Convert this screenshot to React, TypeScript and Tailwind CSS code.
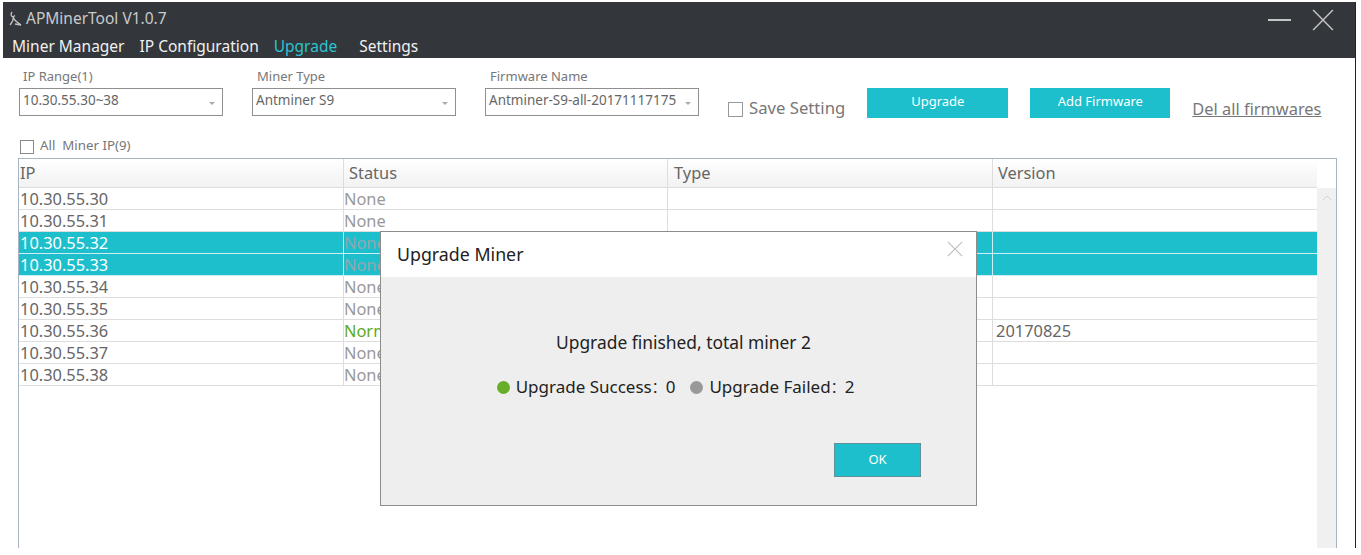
const rows = [
  { ip: "10.30.55.30", status: "None" },
  { ip: "10.30.55.31", status: "None" },
  { ip: "10.30.55.32", status: "None", selected: true },
  { ip: "10.30.55.33", status: "None", selected: true },
  { ip: "10.30.55.34", status: "None" },
  { ip: "10.30.55.35", status: "None" },
  { ip: "10.30.55.36", status: "Normal", version: "20170825" },
  { ip: "10.30.55.37", status: "None" },
  { ip: "10.30.55.38", status: "None" },
];

function Field({ label, value, width, labelPad }: { label: string; value: string; width: string; labelPad: string }) {
  return (
    <div className={width}>
      <div className={`h-[22px] text-[13px] leading-[21px] text-[#777] ${labelPad}`}>{label}</div>
      <div className="flex h-[28px] items-center justify-between border border-[#8f8f8f] pl-[3px] pr-[7px] text-[13.5px] text-[#666]">
        <span className="-mt-[3px] whitespace-nowrap">{value}</span>
        <span className="mt-[2px] h-0 w-0 border-x-[3px] border-t-[3px] border-x-transparent border-t-[#aaa]" />
      </div>
    </div>
  );
}

function Logo() {
  return (
    <svg width="13" height="15" viewBox="0 0 13 15" fill="none" stroke="#c4c4c4" strokeWidth="1.3">
      <path d="M3 1 C1.5 3 2 5.5 4 6 L6 4.5" />
      <path d="M4.5 6 C4.5 9 3.5 11 1 14" />
      <path d="M4.5 7 C6 10 9 12 12 14 L6 13" />
    </svg>
  );
}

function Cross({ size, stroke, width }: { size: number; stroke: string; width: number }) {
  return (
    <svg width={size} height={size} viewBox="0 0 20 20" fill="none" stroke={stroke} strokeWidth={width}>
      <path d="M1 1 L19 19 M19 1 L1 19" />
    </svg>
  );
}

export default function App() {
  return (
    <div className="relative h-[555px] w-[1361px] overflow-hidden bg-white pl-[3px] pr-[5px] pt-[2px] font-['Noto_Sans','Noto_Sans_CJK_SC',sans-serif]">
      <div className="h-[546px] border-r border-[#222]">
        <header className="h-[56px] bg-[#33363b] pl-[9px] pr-[21px] text-white">
          <div className="flex h-[33px] items-center justify-between">
            <div className="flex items-center gap-[4px] text-[15.5px] text-[#c9cacb]">
              <span className="-ml-[3px]"><Logo /></span>
              <span>APMinerTool V1.0.7</span>
            </div>
            <div className="flex items-center gap-[21px] pt-[3px] text-[#c4c5c6]">
              <div className="h-[1.5px] w-[23px] bg-[#c4c5c6]" />
              <Cross size={22} stroke="#c4c5c6" width={1.3} />
            </div>
          </div>
          <nav className="flex gap-[15px] text-[15.5px] leading-[22px] text-[#f0f0f0]">
            <span>Miner Manager</span>
            <span>IP Configuration</span>
            <span className="text-[#2bc4cf]">Upgrade</span>
            <span className="ml-[7px]">Settings</span>
          </nav>
        </header>

        <div className="flex h-[100px] pl-[16px] pt-[8px]">
          <div className="mr-[29px]">
            <Field label="IP Range(1)" value="10.30.55.30~38" width="w-[204px]" labelPad="pl-[4px]" />
          </div>
          <div className="mr-[29px]">
            <Field label="Miner Type" value="Antminer S9" width="w-[204px]" labelPad="pl-[5px]" />
          </div>
          <Field label="Firmware Name" value="Antminer-S9-all-20171117175" width="w-[214px]" labelPad="pl-[5px]" />
          <label className="ml-[29px] mt-[27px] flex h-[30px] items-center text-[16.7px] text-[#777]">
            <span className="mr-[6px] mt-[3px] h-[15px] w-[15px] border border-[#999]" />
            Save Setting
          </label>
          <button className="ml-[22px] mt-[22px] h-[30px] w-[141px] bg-[#1dbfcc] pb-[2px] text-[13px] text-white">Upgrade</button>
          <button className="ml-[22px] mt-[22px] h-[30px] w-[140px] bg-[#1dbfcc] pb-[2px] text-[13px] text-white">Add Firmware</button>
          <a className="ml-[22px] mt-[28px] h-[30px] whitespace-nowrap text-[16.4px] leading-[30px] text-[#777] underline">Del all firmwares</a>
        </div>

        <div className="ml-[15px] mr-[18px] -mt-[21px]">
          <label className="mb-[2px] flex h-[19px] items-center pl-[2px] text-[13.3px] text-[#777]">
            <span className="mr-[6px] h-[14px] w-[14px] border border-[#888]" />
            <span className="-mt-[2px]">All&nbsp; Miner IP(9)</span>
          </label>
          <div className="flex h-[390px] border-l border-t border-r border-[#a9b4c2]">
            <div className="w-[1298px]">
              <div className="flex h-[29px] border-b border-[#ddd] bg-[#f5f5f5] bg-gradient-to-b from-white to-[#f2f2f2] text-[16.4px] leading-[28px] text-[#666]">
                <div className="w-[324px] pl-[1px]">IP</div>
                <div className="w-[324px] border-l border-[#ddd] pl-[5px]">Status</div>
                <div className="w-[325px] border-l border-[#ddd] pl-[6px]">Type</div>
                <div className="flex-1 border-l border-[#ddd] pl-[5px]">Version</div>
              </div>
              {rows.map((r) => (
                <div
                  key={r.ip}
                  className={`flex h-[22px] border-b text-[16.4px] leading-[21px] ${
                    r.selected ? "border-[#cfeef1] bg-[#1dbfcc] text-white" : "border-[#ddd] text-[#666]"
                  }`}
                >
                  <div className="w-[324px] pl-[1px]">{r.ip}</div>
                  <div
                    className={`w-[324px] border-l ${r.selected ? "border-[#cfeef1] text-[#8fa9ad]" : "border-[#ddd]"} ${
                      r.selected ? "" : r.status === "Normal" ? "text-[#5eaa22]" : "text-[#999]"
                    }`}
                  >
                    {r.status}
                  </div>
                  <div className={`w-[325px] border-l ${r.selected ? "border-[#cfeef1]" : "border-[#ddd]"}`} />
                  <div className={`flex-1 border-l pl-[3px] ${r.selected ? "border-[#cfeef1]" : "border-[#ddd]"}`}>{r.version}</div>
                </div>
              ))}
            </div>
            <div className="mt-[29px] flex w-[19px] justify-center bg-[#f0f0f0] pt-[7px]">
              <svg width="10" height="6" viewBox="0 0 10 6" fill="none" stroke="#d2d2d2" strokeWidth="1">
                <path d="M1 5 L5 1 L9 5" />
              </svg>
            </div>
          </div>
        </div>
      </div>

      <div className="absolute left-[380px] top-[231px] h-[275px] w-[597px] border border-[#8c8c8c] bg-[#eeeeee]">
        <div className="flex h-[45px] items-center justify-between bg-white pl-[16px] pr-[13px] text-[17.8px] text-[#222]">
          <span>Upgrade Miner</span>
          <span className="-mt-[12px]">
            <Cross size={16} stroke="#bbb" width={1.3} />
          </span>
        </div>
        <div className="flex flex-col items-center pt-[53px] leading-[24px] text-[#222]">
          <div className="ml-[10px] text-[17.4px]">Upgrade finished, total miner 2</div>
          <div className="mr-[6px] mt-[21px] flex items-center text-[17px]">
            <span className="mr-[6px] h-[13px] w-[13px] rounded-full bg-[#69ae28]" />
            <span>Upgrade Success</span>
            <span className="text-[14px]">：</span>
            <span>0</span>
            <span className="ml-[15px] mr-[6px] h-[13px] w-[13px] rounded-full bg-[#999]" />
            <span>Upgrade Failed</span>
            <span className="text-[14px]">：</span>
            <span>2</span>
          </div>
        </div>
        <div className="mr-[55px] mt-[44px] flex justify-end">
          <button className="h-[34px] w-[87px] border border-[#5f8f98] bg-[#1dbfcc] text-[13px] text-white">OK</button>
        </div>
      </div>
    </div>
  );
}
